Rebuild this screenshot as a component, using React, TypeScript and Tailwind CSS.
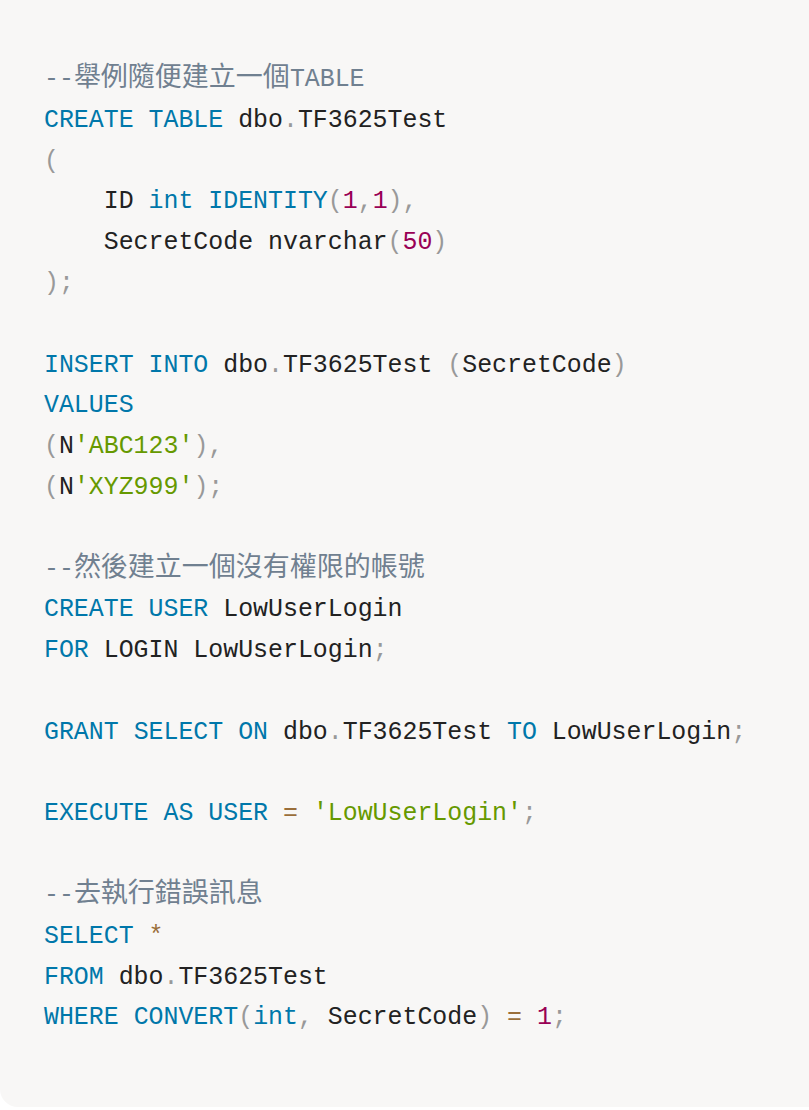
type Tok = [string, string];

const colors: Record<string, string> = {
  k: "text-[#0077aa]",
  t: "text-[#222222]",
  p: "text-[#999999]",
  n: "text-[#990055]",
  s: "text-[#669900]",
  o: "text-[#9a6e3a]",
  c: "text-[#708090]",
  z: "text-[#708090] text-[27px]",
};

const lines: Tok[][] = [
  [["c", "--"], ["z", "舉例隨便建立一個"], ["c", "TABLE"]],
  [["k", "CREATE"], ["t", " "], ["k", "TABLE"], ["t", " dbo"], ["p", "."], ["t", "TF3625Test"]],
  [["p", "("]],
  [["t", "    ID "], ["k", "int"], ["t", " "], ["k", "IDENTITY"], ["p", "("], ["n", "1"], ["p", ","], ["n", "1"], ["p", ")"], ["p", ","]],
  [["t", "    SecretCode nvarchar"], ["p", "("], ["n", "50"], ["p", ")"]],
  [["p", ");"]],
  [],
  [["k", "INSERT"], ["t", " "], ["k", "INTO"], ["t", " dbo"], ["p", "."], ["t", "TF3625Test "], ["p", "("], ["t", "SecretCode"], ["p", ")"]],
  [["k", "VALUES"]],
  [["p", "("], ["t", "N"], ["s", "'ABC123'"], ["p", "),"]],
  [["p", "("], ["t", "N"], ["s", "'XYZ999'"], ["p", ");"]],
  [],
  [["c", "--"], ["z", "然後建立一個沒有權限的帳號"]],
  [["k", "CREATE"], ["t", " "], ["k", "USER"], ["t", " LowUserLogin"]],
  [["k", "FOR"], ["t", " LOGIN LowUserLogin"], ["p", ";"]],
  [],
  [["k", "GRANT"], ["t", " "], ["k", "SELECT"], ["t", " "], ["k", "ON"], ["t", " dbo"], ["p", "."], ["t", "TF3625Test "], ["k", "TO"], ["t", " LowUserLogin"], ["p", ";"]],
  [],
  [["k", "EXECUTE"], ["t", " "], ["k", "AS"], ["t", " "], ["k", "USER"], ["t", " "], ["o", "="], ["t", " "], ["s", "'LowUserLogin'"], ["p", ";"]],
  [],
  [["c", "--"], ["z", "去執行錯誤訊息"]],
  [["k", "SELECT"], ["t", " "], ["o", "*"]],
  [["k", "FROM"], ["t", " dbo"], ["p", "."], ["t", "TF3625Test"]],
  [["k", "WHERE"], ["t", " "], ["k", "CONVERT"], ["p", "("], ["k", "int"], ["p", ","], ["t", " SecretCode"], ["p", ")"], ["t", " "], ["o", "="], ["t", " "], ["n", "1"], ["p", ";"]],
];

export default function App() {
  return (
    <main className="min-h-screen bg-white">
      <pre className="h-[1107px] overflow-hidden rounded-bl-[18px] bg-[#f8f7f6] pl-[44px] pt-[59px] font-['Liberation_Mono','Noto_Sans_CJK_TC',monospace] text-[24.9px] leading-[40.8px] text-[#222222]">
        {lines.map((line, i) => (
          <div key={i} className="h-[40.8px] whitespace-pre">
            {line.length === 0 ? " " : line.map(([type, text], j) => (
              <span key={j} className={colors[type]}>
                {text}
              </span>
            ))}
          </div>
        ))}
      </pre>
    </main>
  );
}
